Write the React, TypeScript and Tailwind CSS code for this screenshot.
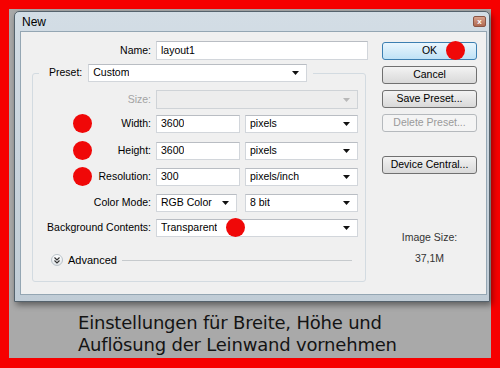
import React from 'react';

const Arrow: React.FC<{ muted?: boolean }> = ({ muted }) => (
  <svg width="7" height="4" viewBox="0 0 7 4" className="shrink-0">
    <path d="M0 0 H7 L3.5 4 Z" fill={muted ? '#b8b8b8' : '#111'} />
  </svg>
);

const Field: React.FC<{ value?: string; w: string; select?: boolean; h?: string; disabled?: boolean }> = ({
  value,
  w,
  select,
  h = 'h-[18px]',
  disabled,
}) => (
  <div
    className={`${w} ${h} flex items-center justify-between pl-[4px] pr-[7px] border ${
      disabled ? 'bg-[#ededed] border-[#cfd3d7]' : 'bg-white border-[#d2d6db] border-t-[#b9bdc3]'
    }`}
  >
    <span className="truncate">{value}</span>
    {select && <Arrow muted={disabled} />}
  </div>
);

const Row: React.FC<{ label: string; mt: string; muted?: boolean; children: React.ReactNode }> = ({
  label,
  mt,
  muted,
  children,
}) => (
  <div className={`flex items-center gap-[5px] ${mt}`}>
    <span className={`w-[112px] text-right ${muted ? 'text-[#a3a3a3]' : 'text-black'}`}>{label}</span>
    {children}
  </div>
);

const Btn: React.FC<{ label: string; mt?: string; primary?: boolean; disabled?: boolean }> = ({
  label,
  mt = '',
  primary,
  disabled,
}) => (
  <div
    className={`${mt} h-[18px] flex items-center justify-center rounded-[3px] border ${
      primary
        ? 'border-[#3c7fb1] bg-gradient-to-b from-[#eaf6fd] to-[#bfe2f6] text-black'
        : disabled
        ? 'border-[#b5b9bd] bg-[#f4f4f4] text-[#9a9a9a]'
        : 'border-[#707070] bg-gradient-to-b from-[#f3f3f3] to-[#d9d9d9] text-black'
    }`}
  >
    {label}
  </div>
);

const Dot: React.FC<{ pos: string }> = ({ pos }) => (
  <div className={`absolute ${pos} w-[19px] h-[19px] rounded-full bg-[#f00808]`} />
);

export default function App() {
  return (
    <div className="relative w-[500px] h-[368px] bg-[#f60000] pt-[9px] pl-[9px] pr-[9px] pb-[10px] font-['Liberation_Sans',Arial,sans-serif] text-[10.5px] text-black">
      <div className="h-full bg-[#a9a9a9] flex flex-col pl-[5px] pr-[1px] pt-[2px]">
        {/* dialog window */}
        <div className="h-[291px] border border-[#55626c] rounded-t-[5px] bg-gradient-to-b from-[#d3dde5] to-[#c0ccd6] flex flex-col shadow-[2px_3px_6px_rgba(0,0,0,0.45)]">
          <div className="h-[19px] flex items-center justify-between pl-[7px] pr-[3px]">
            <span className="text-[12px]">New</span>
            <div className="w-[13px] h-[11px] rounded-[2px] bg-gradient-to-b from-[#d8a28c] to-[#b06a52] border border-[#8a5444] flex items-center justify-center text-white text-[8px] leading-none font-bold">
              x
            </div>
          </div>
          <div className="h-[264px] ml-[5px] mr-[2px] border border-[#94a6b3] bg-[#f0f0f0] flex">
            {/* left pane */}
            <div className="w-[361px] flex flex-col pt-[9px]">
              <div className="flex items-center gap-[5px]">
                <span className="w-[130px] text-right">Name:</span>
                <Field value="layout1" w="w-[212px]" h="h-[19px]" />
              </div>
              <fieldset className="ml-[11px] mt-[4px] w-[334px] h-[218px] border border-[#d3dbe1] rounded-[3px] px-[6px]">
                <legend className="flex items-center pl-[10px] pr-[6px]">
                  <span>Preset:</span>
                  <div className="ml-[6px]">
                    <Field value="Custom" w="w-[219px]" select />
                  </div>
                </legend>
                <Row label="Size:" mt="mt-[8px]" muted>
                  <Field w="w-[202px]" h="h-[19px]" select disabled />
                </Row>
                <Row label="Width:" mt="mt-[6px]">
                  <Field value="3600" w="w-[84px]" />
                  <Field value="pixels" w="w-[113px]" select />
                </Row>
                <Row label="Height:" mt="mt-[9px]">
                  <Field value="3600" w="w-[84px]" />
                  <Field value="pixels" w="w-[113px]" select />
                </Row>
                <Row label="Resolution:" mt="mt-[8px]">
                  <Field value="300" w="w-[84px]" />
                  <Field value="pixels/inch" w="w-[113px]" select />
                </Row>
                <Row label="Color Mode:" mt="mt-[8px]">
                  <Field value="RGB Color" w="w-[81px]" select />
                  <div className="ml-[3px]">
                    <Field value="8 bit" w="w-[113px]" select />
                  </div>
                </Row>
                <Row label="Background Contents:" mt="mt-[7px]">
                  <Field value="Transparent" w="w-[202px]" select />
                </Row>
                <div className="flex items-center mt-[16px] h-[14px]">
                  <div className="ml-[12px] w-[12px] h-[12px] rounded-full border border-[#b9c2c9] bg-gradient-to-b from-white to-[#e2e6ea] flex items-center justify-center">
                    <svg width="6" height="7" viewBox="0 0 6 7">
                      <path d="M0.5 0.5 L3 3 L5.5 0.5 M0.5 3.5 L3 6 L5.5 3.5" stroke="#333" strokeWidth="1.1" fill="none" />
                    </svg>
                  </div>
                  <span className="ml-[5px] text-[11px]">Advanced</span>
                  <div className="flex-1 h-px bg-[#c6cacd] ml-[5px] mr-[7px]" />
                </div>
              </fieldset>
            </div>
            {/* right column */}
            <div className="w-[95px] flex flex-col pt-[10px]">
              <Btn label="OK" primary />
              <Btn label="Cancel" mt="mt-[6px]" />
              <Btn label="Save Preset..." mt="mt-[6px]" />
              <Btn label="Delete Preset..." mt="mt-[6px]" disabled />
              <Btn label="Device Central..." mt="mt-[24px]" />
              <div className="mt-[57px] text-center text-[#333] leading-[13px]">Image Size:</div>
              <div className="mt-[8px] text-center text-[#333] leading-[13px]">37,1M</div>
            </div>
          </div>
        </div>
        {/* caption */}
        <div className="ml-[64px] mt-[10px] font-['DejaVu_Sans',sans-serif] text-[18px] leading-[22px] text-[#141414] tracking-[-0.2px]">
          <div>Einstellungen für Breite, Höhe und</div>
          <div>Auflösung der Leinwand vornehmen</div>
        </div>
      </div>
      <Dot pos="left-[446px] top-[41px]" />
      <Dot pos="left-[73px] top-[114px]" />
      <Dot pos="left-[73px] top-[141px]" />
      <Dot pos="left-[73px] top-[167px]" />
      <Dot pos="left-[226px] top-[218px]" />
    </div>
  );
}
